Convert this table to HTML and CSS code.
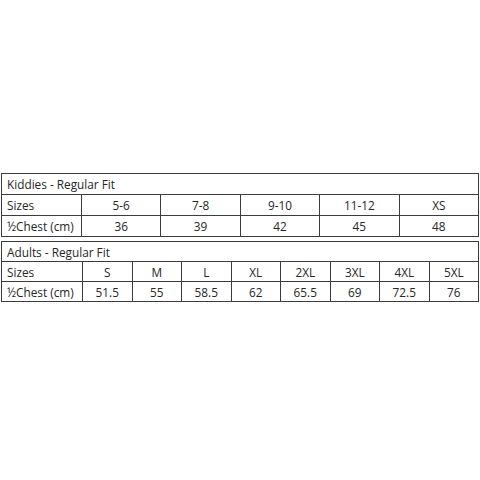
FILE: index.html
```html
<!DOCTYPE html>
<html>
<head>
<meta charset="utf-8">
<link rel="stylesheet" href="styles.css">
</head>
<body>
<div class="page">
  <table class="chart kids">
    <colgroup><col class="label-col"><col><col><col><col><col></colgroup>
    <tr><td class="title" colspan="6">Kiddies - Regular Fit</td></tr>
    <tr><td class="label">Sizes</td><td>5-6</td><td>7-8</td><td>9-10</td><td>11-12</td><td>XS</td></tr>
    <tr><td class="label">½Chest (cm)</td><td>36</td><td>39</td><td>42</td><td>45</td><td>48</td></tr>
  </table>
  <table class="chart adults">
    <colgroup><col class="label-col"><col><col><col><col><col><col><col><col></colgroup>
    <tr><td class="title" colspan="9">Adults - Regular Fit</td></tr>
    <tr><td class="label">Sizes</td><td>S</td><td>M</td><td>L</td><td>XL</td><td>2XL</td><td>3XL</td><td>4XL</td><td>5XL</td></tr>
    <tr><td class="label">½Chest (cm)</td><td>51.5</td><td>55</td><td>58.5</td><td>62</td><td>65.5</td><td>69</td><td>72.5</td><td>76</td></tr>
  </table>
</div>
</body>
</html>
```
FILE: styles.css
```css
html, body {
  margin: 0;
  padding: 0;
  background: #ffffff;
}
.page {
  padding: 173px 1px 0 1px;
  display: flex;
  flex-direction: column;
  gap: 4px;
  font-family: "Open Sans", "Liberation Sans", sans-serif;
  color: #262626;
}
.chart {
  width: 478px;
  border-collapse: collapse;
  table-layout: fixed;
  font-size: 11.8px;
}
.chart td {
  border: 1.5px solid #3c3c3c;
  padding: 0;
  text-align: center;
  white-space: nowrap;
  line-height: 16px;
}
.kids tr {
  height: 21px;
}
.adults tr {
  height: 20px;
}
.kids .label-col {
  width: 80px;
}
.adults .label-col {
  width: 81px;
}
.chart td.title,
.chart td.label {
  text-align: left;
  padding-left: 5px;
}
```
